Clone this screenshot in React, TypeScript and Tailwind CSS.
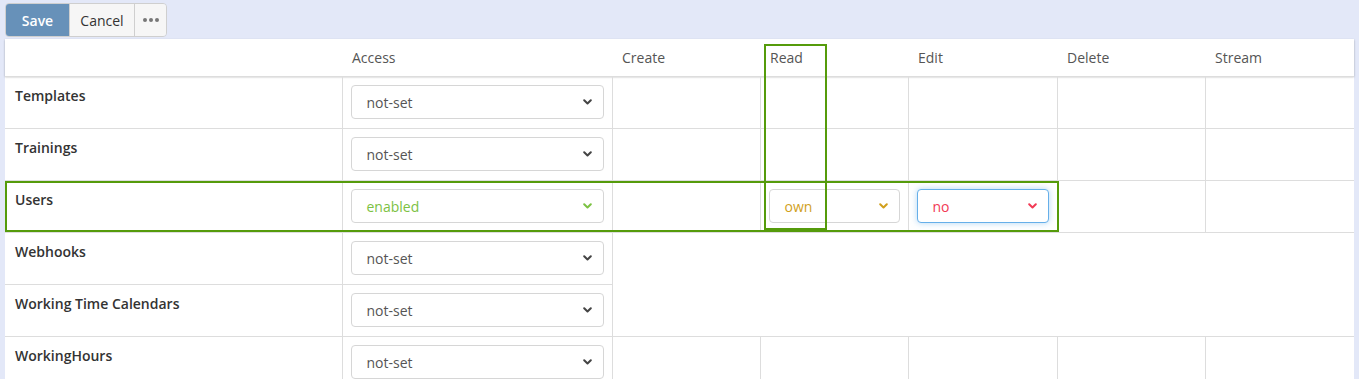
import React from 'react';

type Tone = 'default' | 'enabled' | 'own' | 'no';

const toneText: Record<Tone, string> = {
  default: 'text-[#555555]',
  enabled: 'text-[#7cc243]',
  own: 'text-[#d19f1c]',
  no: 'text-[#f23a55]',
};

const toneChevron: Record<Tone, string> = {
  default: '#444444',
  enabled: '#7cc243',
  own: '#d19f1c',
  no: '#f23a55',
};

const Chevron = ({ color }: { color: string }) => (
  <svg width="9" height="6" viewBox="0 0 9 6" fill="none">
    <path d="M1.2 1.2 4.5 4.5l3.3-3.3" stroke={color} strokeWidth="2" strokeLinecap="round" strokeLinejoin="round" />
  </svg>
);

const Select = ({ value, tone = 'default', focus = false }: { value: string; tone?: Tone; focus?: boolean }) => (
  <div
    className={`flex h-[34px] items-center justify-between rounded-[4px] border bg-white pl-[15px] pr-[11px] text-[14px] ${toneText[tone]} ${
      focus ? 'border-[#66afe9] shadow-[0_0_6px_rgba(102,175,233,0.5)]' : 'border-[#d6d6d6]'
    }`}
  >
    <span className="pt-[1px]">{value}</span>
    <Chevron color={toneChevron[tone]} />
  </div>
);

const cols = ['Create', 'Read', 'Edit', 'Delete', 'Stream'];
const widths = ['w-[148px]', 'w-[148px]', 'w-[149px]', 'w-[148px]', 'w-[149px]'];

const EmptyCells = () => (
  <>
    {cols.map((c, i) => (
      <td key={c} className={`${widths[i]} border-l border-[#dddddd]`} />
    ))}
  </>
);

export default function App() {
  return (
    <div className="relative h-[379px] w-[1359px] overflow-hidden bg-[#e3e8f8] font-['Open_Sans',sans-serif] text-[14px]">
      <div className="flex px-[5px] pt-[3px]">
        <div className="flex h-[34px] overflow-hidden rounded-[4px] border border-[#cfcfcf]">
          <button className="w-[63px] bg-[#6791b9] font-semibold text-white">Save</button>
          <button className="w-[65px] border-l border-[#cfcfcf] bg-[#f6f6f6] text-[#333333]">Cancel</button>
          <button className="flex w-[32px] items-center justify-center gap-[2px] border-l border-[#cfcfcf] bg-[#f6f6f6]">
            <span className="h-[4px] w-[4px] rounded-full bg-[#777777]" />
            <span className="h-[4px] w-[4px] rounded-full bg-[#777777]" />
            <span className="h-[4px] w-[4px] rounded-full bg-[#777777]" />
          </button>
        </div>
      </div>

      <div className="mx-[5px] mt-[2px] bg-white">
        <table className="w-[1349px] table-fixed border-collapse">
          <thead>
            <tr className="h-[37px] text-left text-[#555555] shadow-[0_1px_2px_rgba(0,0,0,0.3)]">
              <th className="w-[337px]" />
              <th className="w-[270px] pl-[10px] font-normal">Access</th>
              {cols.map((c, i) => (
                <th key={c} className={`${widths[i]} pl-[10px] font-normal`}>
                  {c}
                </th>
              ))}
            </tr>
          </thead>
          <tbody className="text-[#333333]">
            {[
              { name: 'Templates', access: 'not-set' },
              { name: 'Trainings', access: 'not-set' },
            ].map((r) => (
              <tr key={r.name} className="h-[52px] border-t border-[#dddddd]">
                <td className="pl-[10px] pt-[8px] align-top font-semibold">{r.name}</td>
                <td className="border-l border-[#dddddd] px-[8px] py-[8px] align-top">
                  <Select value={r.access} />
                </td>
                <EmptyCells />
              </tr>
            ))}
            <tr className="h-[52px] border-t border-[#dddddd]">
              <td className="pl-[10px] pt-[8px] align-top font-semibold">Users</td>
              <td className="border-l border-[#dddddd] px-[8px] py-[8px] align-top">
                <Select value="enabled" tone="enabled" />
              </td>
              <td className="border-l border-[#dddddd]" />
              <td className="border-l border-[#dddddd] px-[8px] py-[8px] align-top">
                <Select value="own" tone="own" />
              </td>
              <td className="border-l border-[#dddddd] px-[8px] py-[8px] align-top">
                <Select value="no" tone="no" focus />
              </td>
              <td className="border-l border-[#dddddd]" />
              <td className="border-l border-[#dddddd]" />
            </tr>
            <tr className="h-[52px] border-t border-[#dddddd]">
              <td className="pl-[10px] pt-[8px] align-top font-semibold">Webhooks</td>
              <td className="border-l border-[#dddddd] px-[8px] py-[8px] align-top">
                <Select value="not-set" />
              </td>
              <td colSpan={5} rowSpan={2} className="border-l border-[#dddddd]" />
            </tr>
            <tr className="h-[52px] border-t border-[#dddddd]">
              <td className="pl-[10px] pt-[8px] align-top font-semibold">Working Time Calendars</td>
              <td className="border-l border-[#dddddd] px-[8px] py-[8px] align-top">
                <Select value="not-set" />
              </td>
            </tr>
            <tr className="h-[52px] border-t border-[#dddddd]">
              <td className="pl-[10px] pt-[8px] align-top font-semibold">WorkingHours</td>
              <td className="border-l border-[#dddddd] px-[8px] py-[8px] align-top">
                <Select value="not-set" />
              </td>
              <EmptyCells />
            </tr>
          </tbody>
        </table>
      </div>

      {/* annotation boxes */}
      <div className="pointer-events-none absolute left-[764px] top-[44px] h-[186px] w-[63px] border-2 border-[#559b0b]" />
      <div className="pointer-events-none absolute left-[5px] top-[181px] h-[51px] w-[1054px] border-2 border-[#559b0b]" />
    </div>
  );
}
